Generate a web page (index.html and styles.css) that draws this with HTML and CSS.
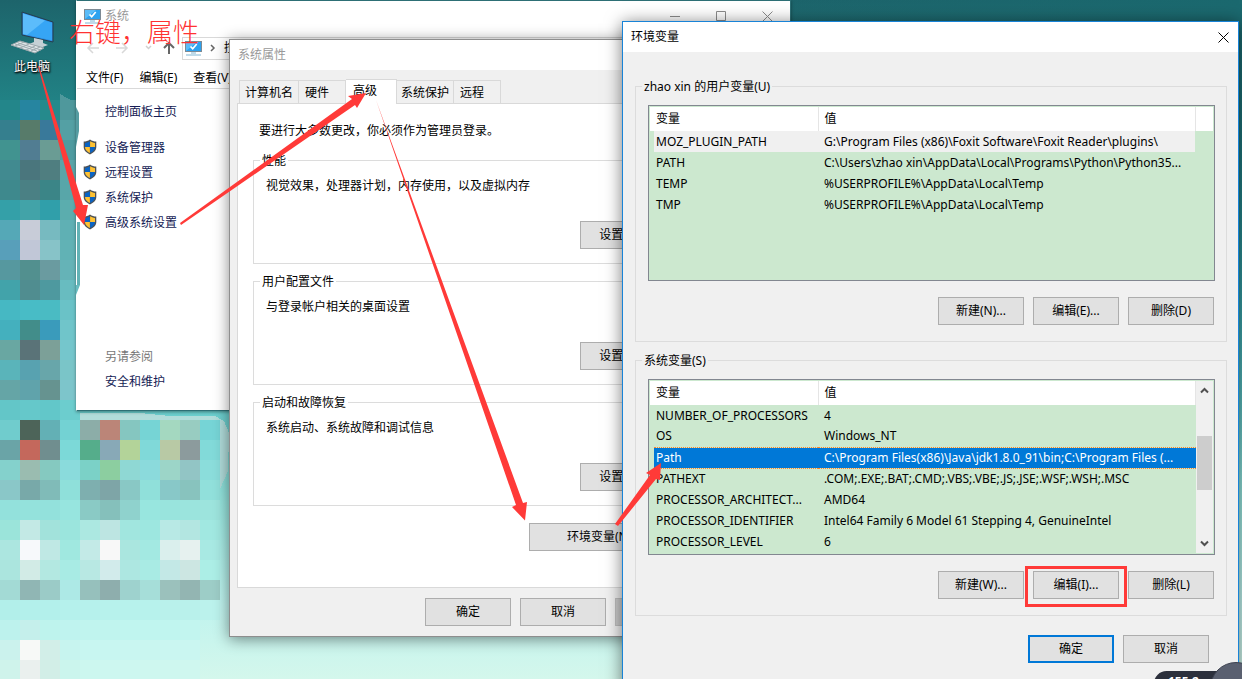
FILE: index.html
```
<!DOCTYPE html>
<html lang="zh-CN">
<head>
<meta charset="utf-8">
<title>环境变量</title>
<link rel="stylesheet" href="styles.css">
</head>
<body>
<svg class="defs" aria-hidden="true">
  <symbol id="shield" viewBox="0 0 14 16">
    <path d="M7 .6C5 2 3 2.600.700 2.600V8c0 3.500 2.800 5.800 6.300 7.400C10.500 13.800 13.300 11.500 13.300 8V2.600C11 2.600 9 2 7 .6z" fill="#4d5257"/>
    <path d="M6.900 2.300V8H2V3.900C4 3.800 5.500 3.200 6.900 2.300z" fill="#0a64c4"/>
    <path d="M7.100 2.300V8H12V3.900C10 3.800 8.500 3.200 7.100 2.300z" fill="#ffc233"/>
    <path d="M2 8h4.900v6C4.200 12.700 2 10.800 2 8z" fill="#ffc233"/>
    <path d="M12 8H7.100v6C9.800 12.700 12 10.800 12 8z" fill="#0a64c4"/>
  </symbol>
  <symbol id="monitor" viewBox="0 0 17 15">
    <rect x=".5" y=".5" width="16" height="10" fill="#2da2ef" stroke="#7d8a94"/>
    <path d="M1 10V1h11z" fill="#5bbcf8"/>
    <path d="M5.500 5.500l2.200 2.200 4-4.700" fill="none" stroke="#fff" stroke-width="1.700"/>
    <path d="M6 12h5M1 14h15" stroke="#7eb6d4"/>
  </symbol>
</svg>
<main class="desktop">
  <svg class="mosaic" id="mosaic" width="240" height="679" shape-rendering="crispEdges" aria-hidden="true"></svg>

  <div class="pc">
    <svg width="44" height="44" viewBox="0 0 44 44" aria-hidden="true">
      <path d="M12 1l31 10v20L12 24z" fill="#2a86d8" stroke="#263d4d"/>
      <path d="M13 2.500l29 9.200v17.800L13 23z" fill="#36a5f5"/>
      <path d="M13 2.500l22 7L17 24l-4-1z" fill="#5cbcfb"/>
      <path d="M24 27l9 2v3l5 2-8 3-11-4 5-2z" fill="#c5d0d5"/>
      <path d="M10 30l24 7-9 5L1 34z" fill="#dfe5e7" stroke="#98a5aa"/>
      <path d="M8 32l23 7M5 33l22 7M14 31l-9 4M19 33l-9 4M25 35l-9 4M30 36l-9 4" stroke="#9eabb0" fill="none"/>
    </svg>
    <span>此电脑</span>
  </div>

  <section class="window system" aria-label="系统">
    <header class="titlebar">
      <svg width="17" height="15"><use href="#monitor"/></svg>
      <span class="grow">系统</span>
      <button class="cap" aria-label="最小化"><svg width="11" height="11"><path d="M0 5.500h10"/></svg></button>
      <button class="cap" aria-label="最大化"><svg width="11" height="11"><path d="M.5.500h9v9h-9z"/></svg></button>
      <button class="cap" aria-label="关闭"><svg width="11" height="11"><path d="M.5.500l10 10M10.500.500l-10 10"/></svg></button>
    </header>
    <nav class="navrow">
      <svg width="90" height="14" viewBox="0 0 90 14" fill="none" aria-hidden="true">
        <path d="M14 7H3M8 2L3 7l5 5M31 7h11M37 2l5 5-5 5" stroke="#d8d8d8" stroke-width="1.500"/>
        <path d="M61 5l2.500 2.500L66 5" stroke="#d0d0d0" stroke-width="1.500"/>
        <path d="M84 13V2M79 7l5-5 5 5" stroke="#666" stroke-width="2"/>
      </svg>
      <div class="address"><svg width="17" height="15"><use href="#monitor"/></svg><svg width="6" height="8" fill="none"><path d="M1 1l3 3-3 3" stroke="#666" stroke-width="1.500"/></svg><span>控制面板</span></div>
    </nav>
    <div class="menubar"><span>文件(F)</span><span>编辑(E)</span><span>查看(V)</span></div>
    <div class="side">
      <a href="#" class="home">控制面板主页</a>
      <a href="#"><svg width="14" height="16"><use href="#shield"/></svg>设备管理器</a>
      <a href="#"><svg width="14" height="16"><use href="#shield"/></svg>远程设置</a>
      <a href="#"><svg width="14" height="16"><use href="#shield"/></svg>系统保护</a>
      <a href="#"><svg width="14" height="16"><use href="#shield"/></svg>高级系统设置</a>
      <span class="also">另请参阅</span>
      <a href="#">安全和维护</a>
    </div>
  </section>

  <section class="window props" aria-label="系统属性">
    <header class="titlebar">系统属性</header>
    <div class="tabs" role="tablist">
      <button role="tab">计算机名</button><button role="tab" class="w2">硬件</button><button role="tab" class="active" aria-selected="true">高级</button><button role="tab">系统保护</button><button role="tab" class="w2">远程</button>
    </div>
    <div class="panel">
      <p>要进行大多数更改，你必须作为管理员登录。</p>
      <fieldset><legend>性能</legend><p>视觉效果，处理器计划，内存使用，以及虚拟内存</p><button class="btn">设置(S)...</button></fieldset>
      <fieldset><legend>用户配置文件</legend><p>与登录帐户相关的桌面设置</p><button class="btn">设置(E)...</button></fieldset>
      <fieldset><legend>启动和故障恢复</legend><p>系统启动、系统故障和调试信息</p><button class="btn">设置(T)...</button></fieldset>
      <button class="btn wide">环境变量(N)...</button>
    </div>
    <footer class="actions"><button class="btn">确定</button><button class="btn">取消</button><button class="btn" disabled>应用(A)</button></footer>
  </section>

  <section class="window env" aria-label="环境变量">
    <header class="titlebar"><span class="grow">环境变量</span><button class="cap" aria-label="关闭"><svg width="11" height="11"><path d="M.5.500l10 10M10.500.500l-10 10"/></svg></button></header>
    <div class="envbody">
      <fieldset>
        <legend>zhao xin 的用户变量(U)</legend>
        <div class="list">
          <table>
            <colgroup><col class="pad"><col class="name"><col><col class="tail"></colgroup>
            <thead><tr><th></th><th>变量</th><th>值</th><th></th></tr></thead>
            <tbody>
              <tr class="hot"><td></td><td>MOZ_PLUGIN_PATH</td><td>G:\Program Files (x86)\Foxit Software\Foxit Reader\plugins\</td><td></td></tr>
              <tr><td></td><td>PATH</td><td>C:\Users\zhao xin\AppData\Local\Programs\Python\Python35...</td><td></td></tr>
              <tr><td></td><td>TEMP</td><td>%USERPROFILE%\AppData\Local\Temp</td><td></td></tr>
              <tr><td></td><td>TMP</td><td>%USERPROFILE%\AppData\Local\Temp</td><td></td></tr>
            </tbody>
          </table>
        </div>
        <div class="actions"><button class="btn">新建(N)...</button><button class="btn">编辑(E)...</button><button class="btn">删除(D)</button></div>
      </fieldset>
      <fieldset>
        <legend>系统变量(S)</legend>
        <div class="list">
          <table>
            <colgroup><col class="pad"><col class="name"><col></colgroup>
            <thead><tr><th></th><th>变量</th><th>值</th></tr></thead>
            <tbody>
              <tr><td></td><td>NUMBER_OF_PROCESSORS</td><td>4</td></tr>
              <tr><td></td><td>OS</td><td>Windows_NT</td></tr>
              <tr class="selected"><td></td><td>Path</td><td>C:\Program Files(x86)\Java\jdk1.8.0_91\bin;C:\Program Files (...</td></tr>
              <tr><td></td><td>PATHEXT</td><td>.COM;.EXE;.BAT;.CMD;.VBS;.VBE;.JS;.JSE;.WSF;.WSH;.MSC</td></tr>
              <tr><td></td><td>PROCESSOR_ARCHITECT...</td><td>AMD64</td></tr>
              <tr><td></td><td>PROCESSOR_IDENTIFIER</td><td>Intel64 Family 6 Model 61 Stepping 4, GenuineIntel</td></tr>
              <tr><td></td><td>PROCESSOR_LEVEL</td><td>6</td></tr>
            </tbody>
          </table>
          <div class="scroll" aria-hidden="true">
            <svg width="9" height="7"><path d="M1 5.500l3.500-3.500L8 5.500"/></svg>
            <i></i>
            <svg width="9" height="7"><path d="M1 1.500L4.500 5 8 1.500"/></svg>
          </div>
        </div>
        <div class="actions"><button class="btn">新建(W)...</button><button class="btn marked">编辑(I)...</button><button class="btn">删除(L)</button></div>
      </fieldset>
      <footer class="actions"><button class="btn primary">确定</button><button class="btn">取消</button></footer>
    </div>
  </section>

  <div class="gauge"><span>155.2</span><i></i></div>

  <p class="note">右键，属性</p>
  <svg class="arrows" width="1242" height="679" fill="#ff3a38" aria-hidden="true">
    <path d="M76 107l3 6v18l-3 16z" fill="#559ca1"/>
    <path d="M76 285h4l-4 10z" fill="#68bcc0"/>
    <path d="M77 222h3v63h-3z" fill="#62b2b5"/>
    <path d="M38 66l1 0 44 139 5 0-4 20-11-14 3-3z"/>
    <path d="M180 223L352 99l-4-3 18-3-9 15-2-3L181 225z"/>
    <path d="M376 100L523 503l4-1-2 18.500-13-13.500 4-2z"/>
    <path d="M615 524L650 475l-4-2 15-10-1 17-4-1L618 526z"/>
  </svg>
</main>
<script src="mosaic.js"></script>
</body>
</html>
```

FILE: styles.css
```
* { box-sizing: border-box; }
body {
  margin: 0;
  font: 12px/18px "Noto Sans", "Noto Sans CJK SC", sans-serif;
  color: #000;
}
button { font: inherit; color: inherit; padding: 0; margin: 0; }
p { margin: 0; }
a { color: #151c55; text-decoration: none; }
.defs { position: absolute; width: 0; height: 0; }
.grow { flex: 1; }

.desktop {
  position: relative;
  height: 100vh;
  overflow: hidden;
  background:
    radial-gradient(circle at 100% 0, #1b696f 0, transparent 480px),
    linear-gradient(#1d646b, #218285 15%, #2fa3a8 30%, #48bdc3 46%, #68cccc 60%, #96e4dd 74%, #bff3ee 89%, #d4f7ec);
}
.mosaic { position: absolute; left: 0; top: 0; }

.pc {
  position: absolute;
  left: 7px;
  top: 11px;
  width: 50px;
  display: flex;
  flex-direction: column;
  align-items: center;
  gap: 3px;
  color: #fff;
  text-shadow: 0 1px 2px #000, 1px 1px 2px #000;
}

.window { position: absolute; background: #fff; border: 1px solid #8e8e8e; }
.titlebar { display: flex; align-items: center; height: 30px; background: #fff; color: #999; }
.cap { border: 0; background: none; display: flex; }
.cap svg { fill: none; stroke: #8c8c8c; }

.system { left: 76px; top: 0; width: 715px; height: 411px; border-color: #2d6f75; border-left-color: #fff; box-shadow: 0 1px 3px #0006; }
.system .titlebar { padding: 0 17px 0 7px; gap: 4px; }
.system .cap { margin-left: 31px; }
.navrow { display: flex; align-items: center; height: 34px; padding: 0 8px; gap: 7px; }
.address { flex: 1; display: flex; align-items: center; gap: 8px; height: 23px; padding-left: 2px; border: 1px solid #d9d9d9; }
.menubar { display: flex; align-items: center; gap: 16px; height: 24px; padding: 2px 0 0 9px; border-bottom: 1px solid #d9d9d9; }
.side { display: flex; flex-direction: column; padding: 14px 0 0 28px; gap: 7px; }
.side .home { margin-bottom: 11px; }
.side a { position: relative; display: block; }
.side a svg { position: absolute; left: -22px; top: 0; }
.also { margin-top: 109px; color: #777; }

.props { left: 229px; top: 39px; width: 480px; padding-bottom: 10px; background: #f0f0f0; box-shadow: 0 2px 14px #0007; }
.props .titlebar { padding-left: 8px; }
.tabs { display: flex; align-items: flex-end; height: 33px; padding-left: 9px; }
.tabs button { height: 23px; padding: 2px 4px 0; border: 1px solid #d9d9d9; border-width: 1px 1px 0 0; background: #f0f0f0; }
.tabs button:first-child { border-left-width: 1px; width: 60px; padding: 2px 5px 0; }
.tabs .w2 { width: 47px; padding-left: 6px; text-align: left; }
.tabs .active { position: relative; width: 51px; height: 25px; padding: 0 7px 3px; text-align: left; background: #fff; margin-bottom: -1px; }
.panel { margin: 0 7px; padding: 18px 14px 36px 15px; border: 1px solid #d9d9d9; background: #fff; }
.panel > p { padding-left: 6px; margin-bottom: 12px; }
fieldset { min-width: 0; margin: 0 0 10px; border: 1px solid #dcdcdc; }
legend { padding: 0 2px; height: 16px; margin-left: -6px; }
.panel fieldset { display: flex; flex-direction: column; padding: 9px 14px 14px 12px; margin-bottom: 9px; }
.panel fieldset .btn { align-self: flex-end; margin-top: 26px; margin-right: 5px; }
.panel fieldset:last-of-type { margin-bottom: 17px; }

.btn { width: 86px; height: 28px; border: 1px solid #adadad; background: #e1e1e1; }
.btn:disabled { background: #ccc; border-color: #bfbfbf; color: #838383; }
.btn.wide { display: block; width: 150px; margin: 0 7px 0 auto; }
.actions { display: flex; justify-content: flex-end; gap: 9px; padding-right: 1px; }
.props .actions { padding: 10px 7px 0; }

.env { left: 622px; right: 3px; top: 21px; bottom: -12px; border-color: #1883d7; background: #f0f0f0; box-shadow: 0 2px 16px #0008; }
.env .titlebar { padding: 0 9px 0 8px; color: #000; }
.env .cap svg { stroke: #000; }
.envbody { padding: 26px 11px 0 12px; }
.envbody fieldset { padding: 11px 11px 16px 12px; }
.list { display: flex; height: 176px; border: 1px solid #828790; padding: 1px; background: #cce8cf; }
.list + .actions { margin-top: 16px; }
.envbody footer { padding: 9px 18px 0 0; }

table { flex: 1; align-self: flex-start; min-width: 0; table-layout: fixed; border-collapse: collapse; }
.pad { width: 4px; }
.name { width: 164px; }
.tail { width: 18px; }
th, td { padding: 0 0 0 2px; text-align: left; font-weight: 400; white-space: nowrap; overflow: hidden; }
th:nth-child(3), td:nth-child(3) { padding-left: 6px; }
th { height: 24px; background: #fff; border-right: 1px solid #e5e5e5; }
th:first-child, th:nth-child(4) { border-right: 0; }
td { height: 21px; }
.hot td:nth-child(2), .hot td:nth-child(3) { background: #f0f0f0; }
.selected td:nth-child(n+2) { background: #0078d7; color: #fff; border-top: 1px dotted #ff8728; border-bottom: 1px dotted #ff8728; }
.scroll { width: 17px; display: flex; flex-direction: column; align-items: center; justify-content: space-between; padding: 6px 0; background: #f0f0f0; }
.scroll svg { fill: none; stroke: #505050; stroke-width: 2; }
.scroll i { width: 15px; height: 54px; margin-bottom: 8px; background: #cdcdcd; }

.marked { position: relative; }
.marked::after { content: ""; position: absolute; inset: -6px -9px -9px; border: 3px solid #ff3a38; }
.primary { border: 2px solid #0078d7; }

.gauge { position: absolute; right: -20px; bottom: -17px; width: 108px; height: 25px; border-radius: 13px; background: #2c303c; color: #fff; font-weight: 700; }
.gauge span { position: absolute; left: 14px; top: 2px; }
.gauge i { position: absolute; right: 0; top: -9px; width: 52px; height: 52px; border-radius: 50%; background: #5a6070; border: 1px solid #3d4250; }

.note { position: absolute; left: 69px; top: 14px; color: #ff3232; font: 300 26px/34px "Noto Sans CJK SC", sans-serif; }
.arrows { position: absolute; left: 0; top: 0; pointer-events: none; }
```

FILE: mosaic.js
```
const CELL = 20;
const left = [
  [5, "#23868a #2685a0 #258a8c #4f989c"],
  [6, "#357f8e #577b6a #39799a #54a0a4"],
  [7, "#419390 #517d92 #6a9c94 #4e9ba0"],
  [8, "#418a90 #4a767d #4f7e80 #5aa5a8"],
  [9, "#3e898d #4a8084 #3b8587 #58a6a9"],
  [10, "#34a0a8 #42a3a8 #309faa #5badae"],
  [11, "#55a8b7 #c8ccd8 #77bac0 #5fb0b4"],
  [12, "#589fba #c1c7d7 #87c3c8 #61b2b5"],
  [13, "#56989f #52908f #6a9ba0 #65b3b7"],
  [14, "#42a3aa #508d90 #4e999f #68bcc0"],
  [15, "#46b8c3 #48bcc6 #4abbc3 #6ac2c7"],
  [16, "#44b0be #428d8a #3a9bbb #70c5ca"],
  [17, "#69a7a2 #5a7378 #7ca098 #75c6cc"],
  [18, "#5ab4ba #58a2b0 #68a6aa #7ac5c8"],
  [19, "#65a5a6 #60a3ab #669390 #7dc5cb"],
  [20, "#63c6c8 #65c8ca #62c7c9 #6ccdce"]
];
const lower = [
  [21, "#70cccd #4d6459 #63b0b5 #73d2d3 #8cada8 #bb8578 #85c6c0 #76d4d5 #a4d8c0 #98ccc1 #76d4d6"],
  [22, "#6aa4a7 #c4685c #708e8f #7cd9d8 #55ad8b #88a9b7 #b3d399 #80d9d9 #b8c9a5 #8c9b9d #82dad9"],
  [23, "#84d1cc #9abcb0 #85c9c0 #8adbdc #7bd1c7 #8ccea0 #8fd8d4 #8bdadc #9cd5c8 #92c5c5 #8bdddb"],
  [24, "#8ac7c8 #78a9a9 #80bbb8 #8fe0da #7eafaf #7ea5a7 #89c8c5 #90e0da #88c8c8 #88c3be #91e0db"],
  [25, "#93e1dc #94e2dc #93e1dc #97e5df #8acac5 #85c0bb #8fd2cd #98e6df #99e4dd #9be4dd #9de4dd"],
  [26, "#9be4da #c3e9e5 #a2e2db #9be5dd #ace8e1 #bde5e2 #a1e6df #9de7e0 #b8e9e5 #b3e6e1 #a1e8e1"],
  [27, "#ace6e0 #f7f9fb #bfe8e4 #a0e8e0 #c3eae7 #f8f8f8 #aae6df #a3e9e2 #daefed #e6f1ef #a8e9e3"],
  [28, "#abe5de #d2ebe6 #b3e8e1 #a8ebe4 #b8e8e3 #d2ebeb #ade7e1 #a9ebe4 #c3e8e6 #cce6e2 #aceee6"],
  [29, "#a3dad5 #90b6b4 #9bcbc7 #ade9e6 #96c0bc #8eaead #9ed2ce #a6ded9 #9bc1bc #93b5b2 #9dcdc7"],
  [30, "#b2efea #b3f0eb #b3f0eb #b5f1ec #b6f1ec #b7f2ec #b7f2ec #b7f2ec #b9f1eb #b9f1eb #bbf2ec"],
  [31, "#bdf2ed #c5efeb #bef3ed #bff3ef #c0f4ee #c0f4ee #c0f5ef #c0f5ef #c0f5ef #c2f5ef"],
  [32, "#cbf2ed #f7f9f7 #d2eee8 #c7f4ef #c8f6f1 #c8f6f1 #c9f6f1 #c9f6f0 #caf6f1 #caf6f1"],
  [33, "#cff3eb #eaf0ee #d2eee7 #cbf5ed #ccf7ef #cdf7f0 #cdf7f0 #cef7ef #cef7ef #cff7ef"]
];
const edges = `<path fill="#b0dcda" d="M80 413h60l30 3h45l9 5 5 12-1 38-8 18V420H80z"/><path fill="#4f989c" d="M60 94l14 8 3 6H60z"/>`;
const cells = [...left, ...lower].map(([row, line]) =>
  line.split(" ").map((fill, col) =>
    `<rect x="${col * CELL}" y="${row * CELL}" width="${CELL}" height="${CELL}" fill="${fill}"/>`).join("")
).join("");
document.getElementById("mosaic").innerHTML = edges + cells;
```
